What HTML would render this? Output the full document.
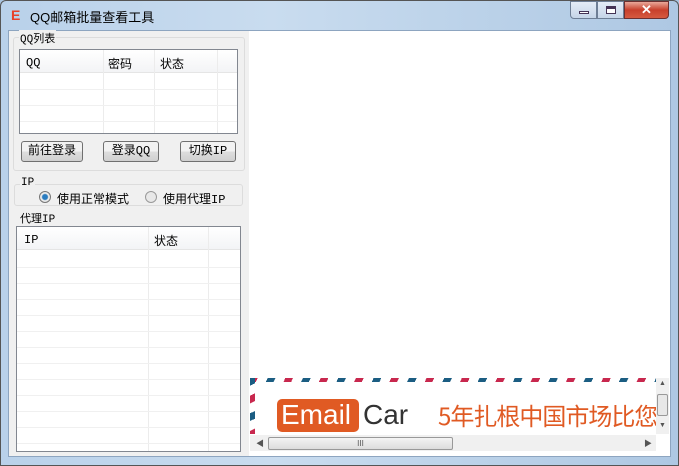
<!DOCTYPE html>
<html><head><meta charset="utf-8"><style>
*{margin:0;padding:0;box-sizing:border-box}
body{width:679px;height:466px;overflow:hidden;position:relative;font-family:"SimSun","Liberation Sans","Noto Sans CJK SC",sans-serif;font-size:12px;color:#000;background:#a9c4e0}
.a{position:absolute}
.frame{left:0;top:0;width:679px;height:466px;background:linear-gradient(90deg,#b9d1ea,#c9dcef 40%,#aec8e3);border:1px solid #555;border-radius:6px 6px 0 0}
.client{left:8px;top:30px;width:663px;height:427px;background:#f0f0f0;border:1px solid #8da5c0}
.grp{border:1px solid #dcdcdc;border-radius:3px}
.lb{font-size:11px;background:#f0f0f0;padding:0 1px;font-family:"Liberation Mono","Noto Sans CJK SC",monospace}
.list{background:#fff;border:1px solid #828790}
.hdr{position:absolute;left:0;right:0;top:0;height:23px;background:linear-gradient(#fff,#f3f4f6);border-bottom:1px solid #e5e5e5}
.btn{height:21px;border:1px solid #707070;border-radius:3px;background:linear-gradient(#f2f2f2 50%,#dedede 50%,#d0d0d0);text-align:center;line-height:19px;font-size:12px;font-family:"Liberation Mono","Noto Sans CJK SC",monospace}
.hl{position:absolute;left:0;right:0;height:1px;background:#f0f0f0}
.vl{position:absolute;top:0;bottom:0;width:1px;background:#ececec}
.t{font-family:"Liberation Mono","Noto Sans CJK SC",monospace;font-size:12px}
</style></head><body>
<div class="a frame"></div>
<div class="a" style="left:11px;top:7px;color:#e8402a;font:bold 14px 'Liberation Sans',sans-serif">E</div>
<div class="a" style="left:30px;top:7px;font:13px 'Liberation Sans','Noto Sans CJK SC',sans-serif">QQ邮箱批量查看工具</div>
<div class="a" style="left:570px;top:1px;width:27px;height:18px;border:1px solid #6d7e95;border-radius:0 0 0 4px;background:linear-gradient(#e4ecf6,#c5d5e8)"><div class="a" style="left:8px;top:9px;width:10px;height:3px;background:#fff;border:1px solid #435"></div></div>
<div class="a" style="left:597px;top:1px;width:27px;height:18px;border:1px solid #6d7e95;background:linear-gradient(#e4ecf6,#c5d5e8)"><div class="a" style="left:8px;top:4px;width:10px;height:8px;border:1px solid #435;border-top-width:3px;background:#fff"></div></div>
<div class="a" style="left:624px;top:1px;width:45px;height:18px;border:1px solid #6d3030;border-radius:0 0 4px 0;background:linear-gradient(#e9a99a,#c8402c 50%,#d65a40);color:#fff;font:bold 13px 'Liberation Sans';text-align:center;line-height:16px">✕</div>
<div class="a client"></div>

<div class="a grp" style="left:13px;top:37px;width:232px;height:134px"></div>
<div class="a lb" style="left:19px;top:30px">QQ列表</div>
<div class="a list" style="left:19px;top:49px;width:219px;height:85px">
 <div class="hdr"></div>
 <div class="vl" style="left:83px"></div><div class="vl" style="left:134px"></div><div class="vl" style="left:197px"></div>
 <div class="hl" style="top:39px"></div><div class="hl" style="top:55px"></div><div class="hl" style="top:71px"></div>
 <div class="a t" style="left:6px;top:6px">QQ</div><div class="a t" style="left:88px;top:5px">密码</div><div class="a t" style="left:140px;top:5px">状态</div>
</div>
<div class="a btn" style="left:21px;top:141px;width:62px">前往登录</div>
<div class="a btn" style="left:103px;top:141px;width:56px">登录QQ</div>
<div class="a btn" style="left:180px;top:141px;width:56px">切换IP</div>

<div class="a grp" style="left:14px;top:184px;width:229px;height:22px"></div>
<div class="a lb" style="left:20px;top:177px">IP</div>
<div class="a" style="left:39px;top:191px;width:12px;height:12px;border-radius:50%;border:1px solid #777;background:radial-gradient(#2a7cc0 2.5px,#eaeaea 3.5px)"></div>
<div class="a t" style="left:57px;top:190px">使用正常模式</div>
<div class="a" style="left:145px;top:191px;width:12px;height:12px;border-radius:50%;border:1px solid #999;background:#e8e8e8"></div>
<div class="a t" style="left:163px;top:190px">使用代理IP</div>

<div class="a lb" style="left:19px;top:210px">代理IP</div>
<div class="a list" style="left:16px;top:226px;width:225px;height:226px">
 <div class="hdr"></div>
 <div class="vl" style="left:131px"></div><div class="vl" style="left:191px"></div>
 <div class="hl" style="top:40px"></div><div class="hl" style="top:56px"></div><div class="hl" style="top:72px"></div><div class="hl" style="top:88px"></div><div class="hl" style="top:104px"></div><div class="hl" style="top:120px"></div><div class="hl" style="top:136px"></div><div class="hl" style="top:152px"></div><div class="hl" style="top:168px"></div><div class="hl" style="top:184px"></div><div class="hl" style="top:200px"></div><div class="hl" style="top:216px"></div>
 <div class="a t" style="left:7px;top:6px">IP</div><div class="a t" style="left:137px;top:5px">状态</div>
</div>

<div class="a" style="left:249px;top:31px;width:421px;height:425px;background:#fff"></div>
<div class="a" style="left:250px;top:378px;width:406px;height:56px;overflow:hidden;background:#fff">
 <div class="a" style="left:0;top:0;width:406px;height:4px;background:repeating-linear-gradient(115deg,#c8284e 0 7px,#fff 7px 16px,#1b5d82 16px 23px,#fff 23px 32px)"></div>
 <div class="a" style="left:0;top:0;width:5px;height:56px;background:repeating-linear-gradient(155deg,#1b5d82 0 7px,#fff 7px 16px,#c8284e 16px 23px,#fff 23px 32px)"></div>
 <div class="a" style="left:27px;top:21px;width:82px;height:33px;background:#e05a23;border-radius:5px;color:#fff;font:28px 'Liberation Sans',sans-serif;line-height:32px;padding-left:4px">Email</div>
 <div class="a" style="left:113px;top:21px;color:#333;font:28px 'Liberation Sans',sans-serif;line-height:32px">Car</div>
 <div class="a" style="left:188px;top:21px;color:#e05a23;font:24px 'Noto Sans CJK SC',sans-serif;line-height:32px;white-space:nowrap;letter-spacing:-1px">5年扎根中国市场比您</div>
</div>
<div class="a" style="left:656px;top:378px;width:13px;height:56px;background:#f0f0f0"><div class="a" style="left:1px;top:16px;width:11px;height:22px;border:1px solid #999;border-radius:2px;background:#e8e8e8"></div><div class="a" style="left:3px;top:2px;font-size:7px;color:#555">▲</div><div class="a" style="left:3px;top:44px;font-size:7px;color:#555">▼</div></div>
<div class="a" style="left:250px;top:435px;width:406px;height:16px;background:#f0f0f0"><div class="a" style="left:18px;top:2px;width:185px;height:13px;border:1px solid #999;border-radius:2px;background:linear-gradient(#f4f4f4,#dcdcdc);text-align:center;font-size:8px;line-height:11px;color:#555">III</div><div class="a" style="left:6px;top:3px;font-size:8px;color:#555">◀</div><div class="a" style="left:394px;top:3px;font-size:8px;color:#555">▶</div></div>
</body></html>
